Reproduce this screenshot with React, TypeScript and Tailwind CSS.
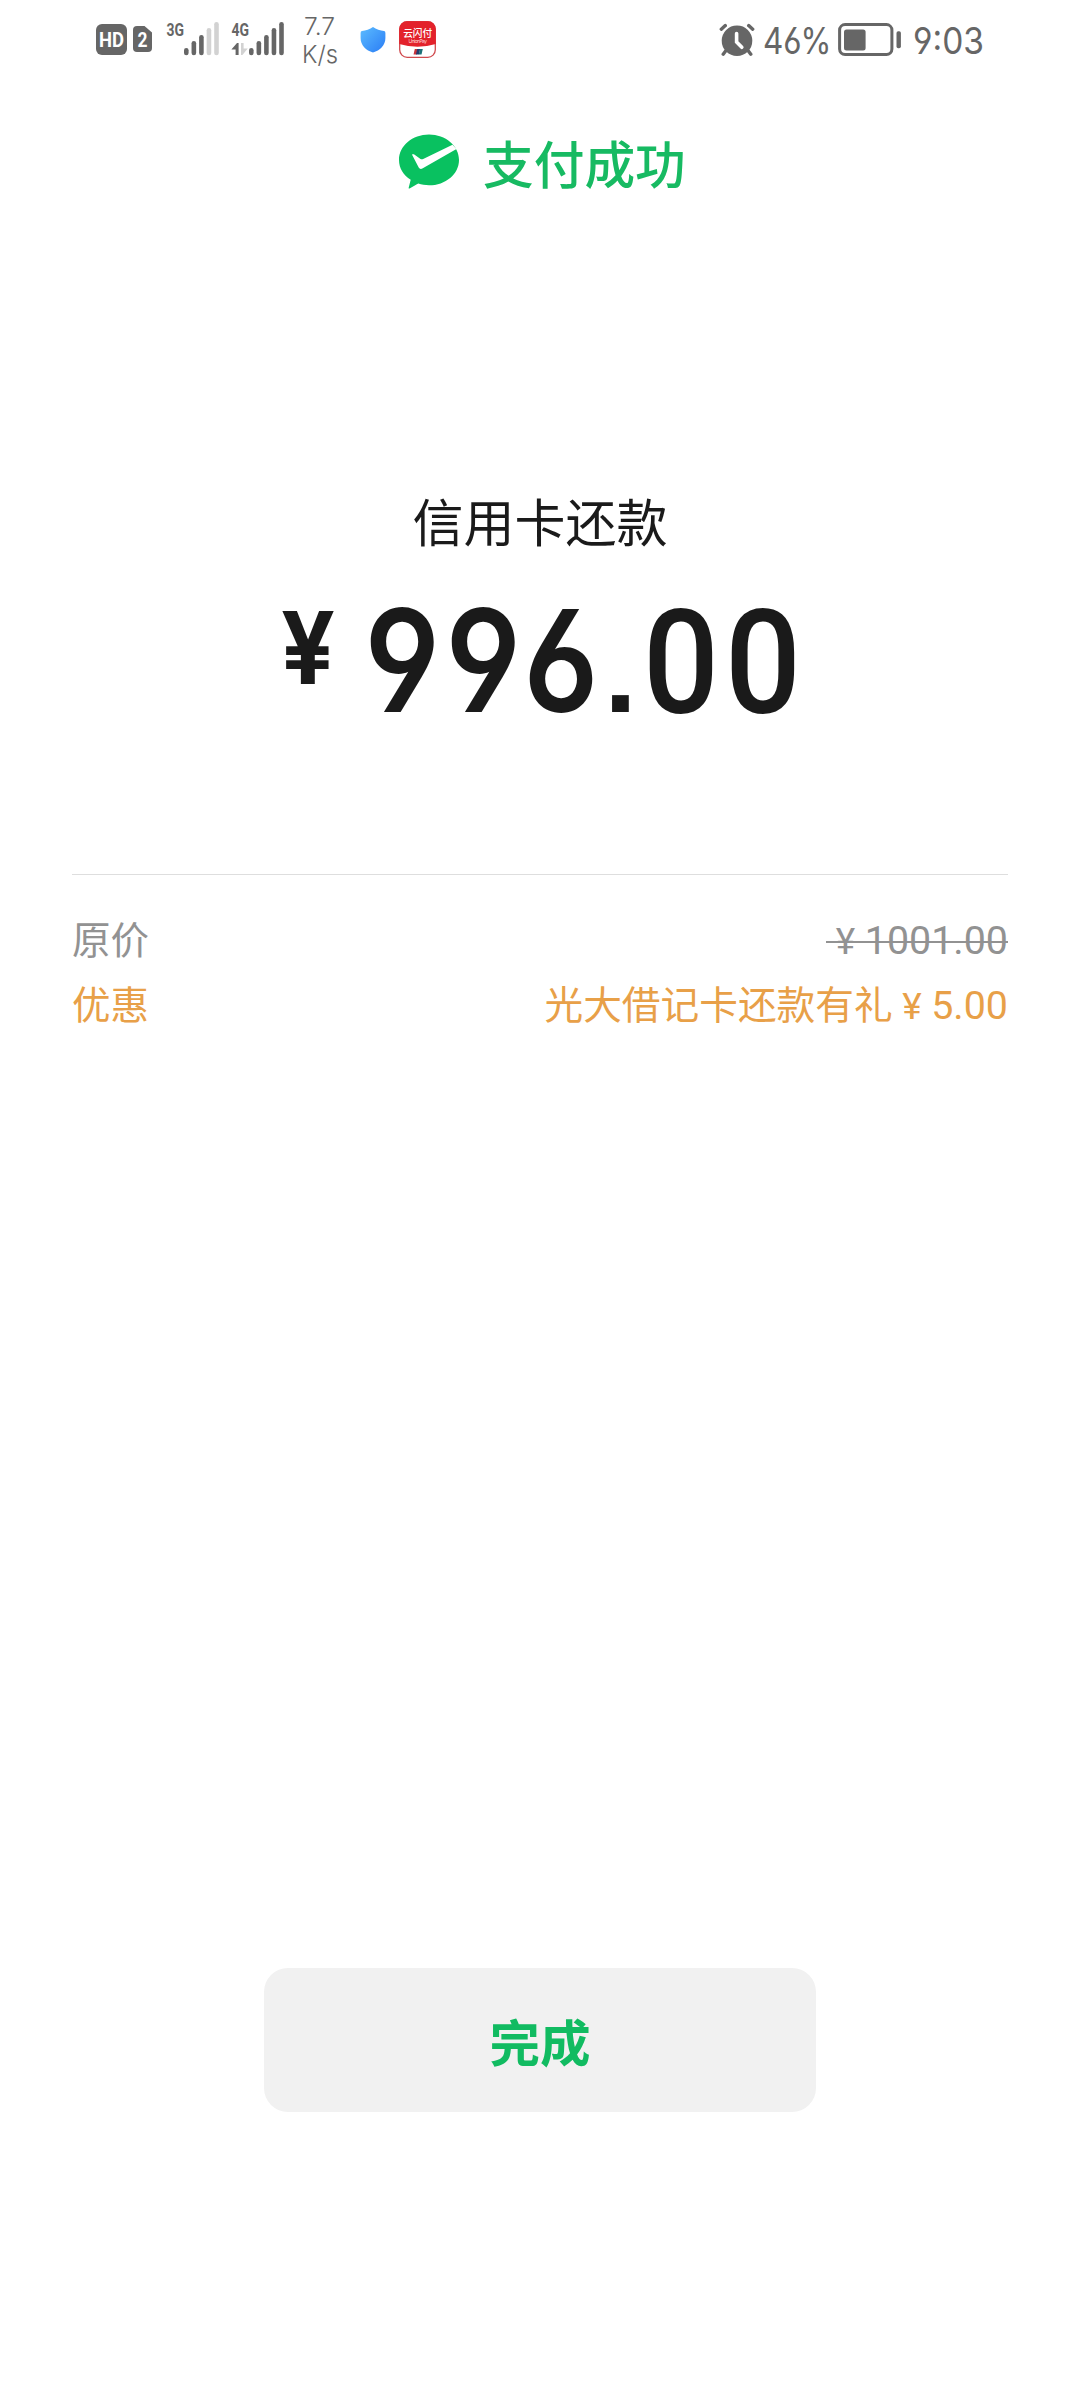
import React from "react";

/** A line of text stretched horizontally to fill an exact width. */
function Fit({ text, width, height, size, baseline, className = "" }: {
  text: string; width: number; height: number; size: number; baseline: number; className?: string;
}) {
  return (
    <svg width={width} height={height} className={`shrink-0 overflow-visible fill-[#666666] font-['Inter',sans-serif] ${className}`}>
      <text
        x="0" y={baseline} fontSize={size} textLength={width} lengthAdjust="spacingAndGlyphs"
        className="[font-feature-settings:'cv03','cv04']"
      >
        {text}
      </text>
    </svg>
  );
}

function Signal({ label, active, arrows }: { label: string; active: number; arrows?: boolean }) {
  const tops = [48, 41, 35, 28, 22];
  return (
    <svg width="54" height="80" viewBox="0 0 54 80" className="shrink-0">
      <text x="0.5" y="36.3" fontSize="18.5" fontWeight="700" fill="#666666" textLength="17.5" lengthAdjust="spacingAndGlyphs" fontFamily="Roboto, sans-serif">{label}</text>
      {tops.map((t, i) => (
        <rect key={t} x={18 + i * 7.55} y={t} width="4.6" height={55.3 - t} rx="2.3" fill={i < active ? "#666666" : "#d2d2d2"} />
      ))}
      {arrows && (
        <>
          <path d="M6 43 H7.6 V55 H4.6 V49.6 H0.4 Z" fill="#666666" />
          <path d="M10 43 H12.6 V48.6 H16.8 L11.4 55 H10 Z" fill="#d2d2d2" />
        </>
      )}
    </svg>
  );
}

function StatusBar() {
  return (
    <header className="flex h-20 items-start pl-24">
      <div className="mt-6 flex h-[31px] w-[31px] shrink-0 items-center justify-center rounded-[6px] bg-[#666666]">
        <Fit text="HD" width={25} height={31} size={19.5} baseline={22.5} className="fill-white! font-['Roboto']! font-bold" />
      </div>
      <svg width="19" height="26" viewBox="0 0 19 26" className="ml-1.5 mt-[26px] shrink-0">
        <path d="M4 0H11.5L19 6.5V22a4 4 0 0 1-4 4H4a4 4 0 0 1-4-4V4a4 4 0 0 1 4-4Z" fill="#666666" />
        <text x="4.6" y="21" fontSize="21" fontWeight="700" fill="#fff" textLength="10" lengthAdjust="spacingAndGlyphs" fontFamily="Roboto, sans-serif">2</text>
      </svg>
      <div className="ml-[14px] flex gap-[10.5px]">
        <Signal label="3G" active={3} />
        <Signal label="4G" active={5} arrows />
      </div>
      <div className="ml-[17px] w-9 font-light">
        <Fit text="7.7" width={31} height={40} size={24.5} baseline={34.5} className="ml-[2.5px] block" />
        <Fit text="K/s" width={36} height={40} size={24.5} baseline={22.5} className="block" />
      </div>
      <svg width="26" height="26" viewBox="0 0 26 26" className="ml-[22px] mt-[27px] shrink-0">
        <defs>
          <linearGradient id="shield" x1="0" y1="0" x2="1" y2="1">
            <stop offset="0" stopColor="#5cbcff" />
            <stop offset="1" stopColor="#2a7cf5" />
          </linearGradient>
        </defs>
        <path d="M13 0C16 2.3 20.5 3.6 24 4Q25.4 4.2 25.4 6V11C25.4 18.5 20 23.3 13 25.6C6 23.3 0.6 18.5 0.6 11V6Q0.6 4.2 2 4C5.5 3.6 10 2.3 13 0Z" fill="url(#shield)" />
      </svg>
      <svg width="37" height="37" viewBox="0 0 37 37" className="ml-[13px] mt-[20.5px] shrink-0">
        <rect x="0.7" y="0.7" width="35.6" height="35.6" rx="7.5" fill="#fff" stroke="#d04a4e" strokeWidth="1.3" />
        <path d="M0.2 8A8 8 0 0 1 8 0.2H29A8 8 0 0 1 36.8 8V23Q18.5 28.5 0.2 23Z" fill="#e3222b" />
        <text x="4.2" y="16" fontSize="10" fontWeight="500" fill="#fff" textLength="29" lengthAdjust="spacingAndGlyphs" fontFamily='"Noto Sans CJK SC", sans-serif'>云闪付</text>
        <text x="9.5" y="21.5" fontSize="5" fill="#ffd9da" textLength="18.5" fontFamily="Inter, sans-serif">UnionPay</text>
        <path d="M15.8 28H19L17.7 33.5H14.5Z" fill="#c8343c" />
        <path d="M18.2 28H21.2L19.9 33.5H16.9Z" fill="#253b6e" />
        <path d="M21 28H23.8L22.5 33.5H19.7Z" fill="#1c7078" />
      </svg>

      <svg width="36" height="34" viewBox="0 0 36 34" className="ml-[283px] mt-[23px] shrink-0">
        <path d="M2.3 6.2L6.3 2.6M33.7 6.2L29.7 2.6M7 27.5L4.2 31.2M29 27.5L31.8 31.2" stroke="#666666" strokeWidth="3.4" strokeLinecap="round" fill="none" />
        <circle cx="18" cy="17.8" r="15.3" fill="#666666" />
        <path d="M17.6 10.5V19L22.8 24.3" stroke="#fff" strokeWidth="3.6" strokeLinecap="round" fill="none" />
      </svg>
      <Fit text="46%" width={68.5} height={80} size={36.5} baseline={54} className="ml-[8px]" />
      <svg width="64" height="34" viewBox="0 0 64 34" className="ml-[6.5px] mt-[22.5px] shrink-0">
        <rect x="1.6" y="1.6" width="52.3" height="30" rx="5.5" fill="none" stroke="#666666" strokeWidth="3" />
        <rect x="6" y="6.5" width="21.6" height="21" rx="2.5" fill="#666666" />
        <rect x="58.5" y="8.2" width="4.4" height="17" rx="1.8" fill="#666666" />
      </svg>
      <Fit text="9:03" width={71} height={80} size={36.5} baseline={54} className="ml-[11px]" />
    </header>
  );
}

function WechatPayIcon() {
  return (
    <svg width="62" height="56" viewBox="0 0 62 56">
      <path d="M31 0.5C47.6 0.5 61 11.8 61 25.9S47.6 51.3 31 51.3C27.2 51.3 23.6 50.7 20.3 49.6C18 50.8 14.8 53 12 54.3C10.6 54.9 10.5 54.3 10.8 53.3L12.7 45.8C5.5 41.2 1 34 1 25.9C1 11.8 14.4 0.5 31 0.5Z" fill="#09c160" />
      <path d="M14.2 20.9Q14.2 19.2 16.3 20.5L22.5 25Q23.8 25.7 25.2 25L54.5 10.7L58.5 14.9L24.8 34.3Q22 35.9 20.7 33.5Z" fill="#fff" />
    </svg>
  );
}

function Amount() {
  const glyphs = [
    { c: "9", x: 82.5, w: 75.5, inter: true },
    { c: "9", x: 163.5, w: 75.5, inter: true },
    { c: "6", x: 241.5, w: 75, inter: true },
    { c: "0", x: 361, w: 76, inter: false },
    { c: "0", x: 443, w: 76, inter: false },
  ];
  return (
    <svg width="520" height="120" viewBox="0 0 520 120" className="overflow-visible fill-[#1a1a1a] font-['Inter',sans-serif] [font-feature-settings:'cv03','cv04']">
      <text x="-1" y="84" fontSize="100" fontWeight="700" textLength="54" lengthAdjust="spacingAndGlyphs">¥</text>
      {glyphs.map((g) => (
        <text
          key={g.x} x={g.x} y={g.inter ? 112 : 112.5} fontSize={g.inter ? 142 : 145}
          textLength={g.w} lengthAdjust="spacingAndGlyphs"
          className={g.inter ? "font-semibold" : "font-['Roboto'] font-medium"}
        >
          {g.c}
        </text>
      ))}
      <text x="322" y="112" fontSize="113" textLength="33" lengthAdjust="spacingAndGlyphs" className="font-['Liberation_Sans'] font-bold">.</text>
    </svg>
  );
}

/** Yuan sign set in a full-width cell, followed by the figures. */
function Price({ value }: { value: string }) {
  return (
    <>
      <span className="inline-block w-[38.5px] text-center font-['Roboto'] text-[37px]">¥</span>
      <span className="font-['Roboto'] text-[39.4px]">{value}</span>
    </>
  );
}

export default function App() {
  return (
    <div className="flex h-[2400px] w-[1080px] flex-col bg-white font-['Noto_Sans_CJK_SC',sans-serif]">
      <StatusBar />
      <div className="mt-[54px] flex h-[60px] items-start pl-[398px]">
        <WechatPayIcon />
        <h1 className="-mt-[2px] ml-[23px] text-[50.7px] font-medium leading-[60px] text-[#17ba62]">支付成功</h1>
      </div>
      <h2 className="mt-[296px] text-center text-[51px] leading-[60px] text-[#1a1a1a]">信用卡还款</h2>
      <div className="mt-[50px] flex h-[120px] pl-[282px]">
        <Amount />
      </div>
      <section className="mx-[72px] mt-[154px] border-t border-[#dedede] pt-[30px] text-[38.5px] leading-[65px]">
        <div className="flex h-[65px] justify-between text-[#929292]">
          <span>原价</span>
          <span className="relative after:absolute after:inset-x-0 after:top-[36px] after:h-[2px] after:bg-[#929292]">
            <Price value="1001.00" />
          </span>
        </div>
        <div className="flex h-[65px] justify-between text-[#e8a048]">
          <span>优惠</span>
          <span className="text-[38.7px]">光大借记卡还款有礼<Price value="5.00" /></span>
        </div>
      </section>
      <button className="mx-auto mt-[933px] flex h-36 w-[552px] items-center justify-center rounded-3xl bg-[#f1f1f1] pt-[1px] text-[50.5px] font-bold text-[#11bb61]">
        完成
      </button>
    </div>
  );
}
